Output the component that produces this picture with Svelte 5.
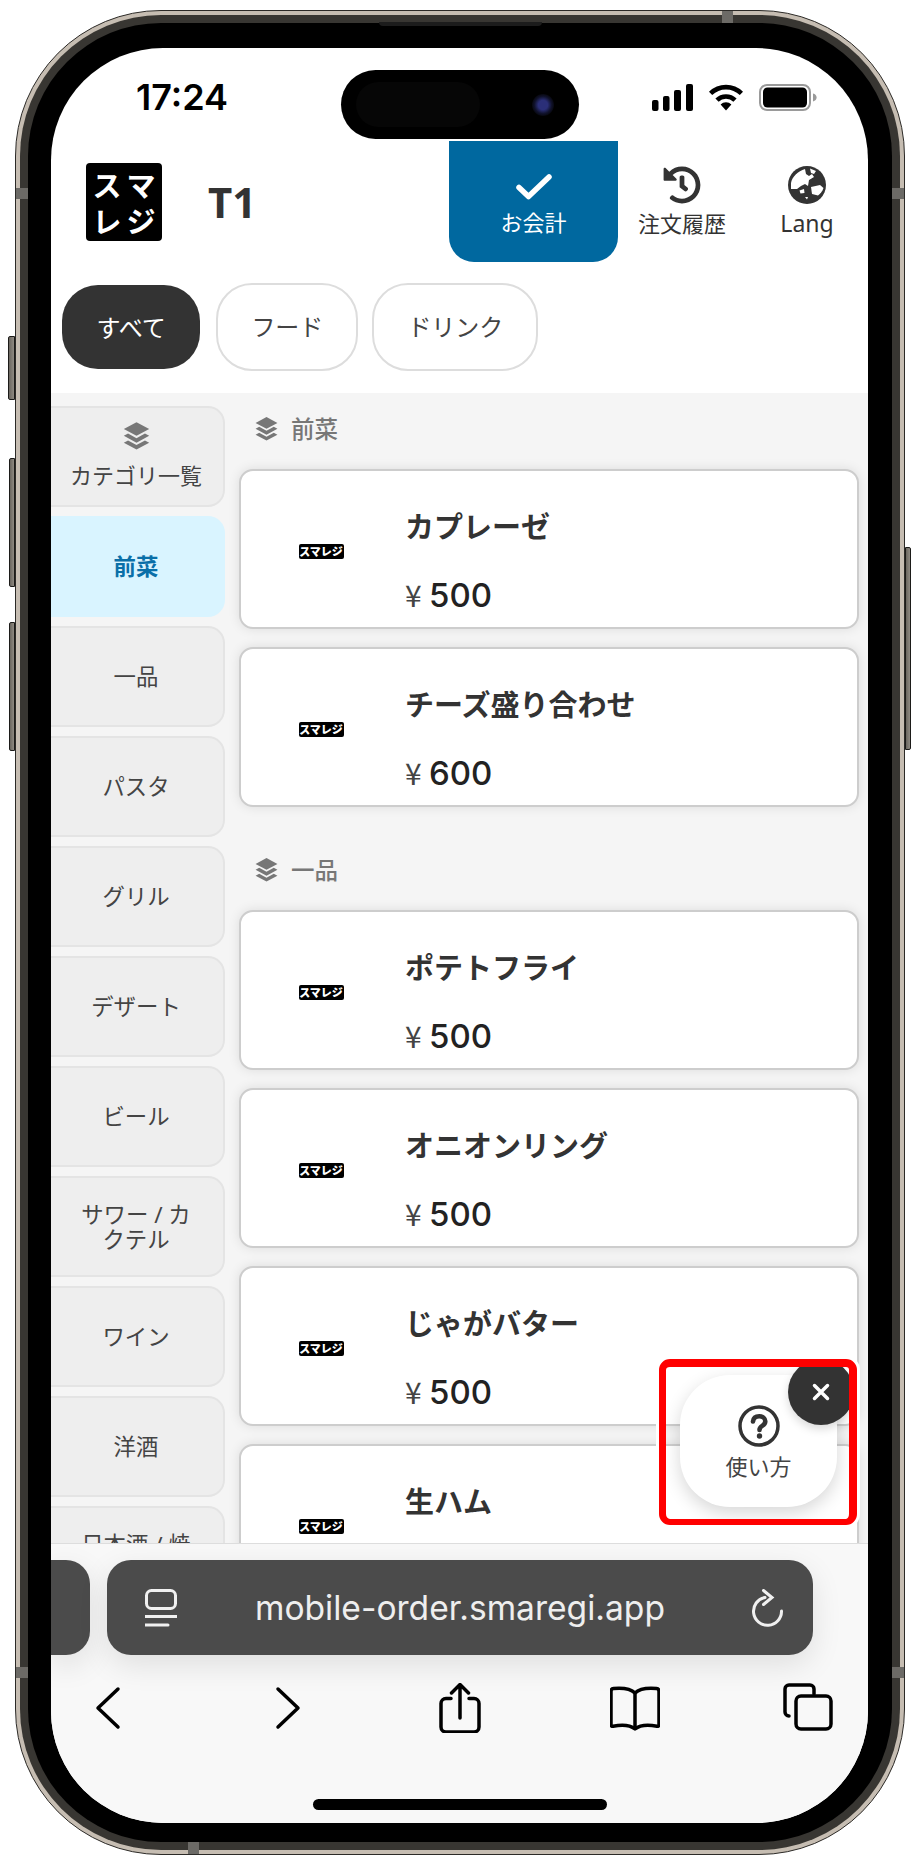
<script>
  const tabs = ["すべて", "フード", "ドリンク"];

  const categories = [
    { name: "前菜", active: true },
    { name: "一品" },
    { name: "パスタ" },
    { name: "グリル" },
    { name: "デザート" },
    { name: "ビール" },
    { name: "サワー / カクテル" },
    { name: "ワイン" },
    { name: "洋酒" },
    { name: "日本酒 / 焼酎" },
  ];

  const sections = [
    {
      title: "前菜",
      items: [
        { name: "カプレーゼ", price: 500 },
        { name: "チーズ盛り合わせ", price: 600 },
      ],
    },
    {
      title: "一品",
      items: [
        { name: "ポテトフライ", price: 500 },
        { name: "オニオンリング", price: 500 },
        { name: "じゃがバター", price: 500 },
        { name: "生ハム", price: 500 },
      ],
    },
  ];
</script>

{#snippet layers(cls)}
  <svg class={cls} viewBox="0 0 24 24" aria-hidden="true">
    <path d="M12 1 22.5 6.6 12 12.2 1.5 6.6Z" />
    <path d="M5 10.4 12 14.2 19 10.4 22.5 12.3 12 18 1.5 12.3Z" />
    <path d="M5 16.1 12 19.9 19 16.1 22.5 18 12 23.6 1.5 18Z" />
  </svg>
{/snippet}

<div class="phone">
  <span class="btn silence"></span>
  <span class="btn vol-up"></span>
  <span class="btn vol-down"></span>
  <span class="btn power"></span>
  <span class="speaker"></span>
  <span class="seam seam-top"></span>
  <span class="seam seam-left"></span>
  <span class="seam seam-right"></span>
  <span class="seam seam-left-low"></span>
  <span class="seam seam-right-low"></span>
  <span class="seam seam-bottom"></span>

  <div class="band">
    <div class="bezel">
      <div class="screen">
        <div class="island">
          <span class="sensor"></span>
          <span class="camera"></span>
        </div>

        <div class="status">
          <span class="time">17:24</span>
          <div class="status-icons">
            <svg class="signal" viewBox="0 0 41 27" aria-hidden="true">
              <rect x="0" y="16" width="6.5" height="11" rx="2" />
              <rect x="11" y="12" width="6.5" height="15" rx="2" />
              <rect x="22" y="6" width="7" height="21" rx="2" />
              <rect x="34" y="0" width="7" height="27" rx="2" />
            </svg>
            <svg class="wifi" viewBox="0 0 36 27" aria-hidden="true">
              <path class="arc" d="M2.6 9.4A22 22 0 0 1 33.4 9.4" />
              <path class="arc" d="M9 16.2A12.8 12.8 0 0 1 27 16.2" />
              <path d="M12.6 20.6A7.6 7.6 0 0 1 23.4 20.6L18 26.4Z" />
            </svg>
            <svg class="battery" viewBox="0 0 58 27" aria-hidden="true">
              <rect class="shell" x="1" y="1" width="50" height="25" rx="7" />
              <rect x="4" y="3.5" width="44" height="20" rx="4.5" />
              <path class="nub" d="M54 9.5c2.4.6 3.6 2.2 3.6 4s-1.2 3.4-3.6 4Z" />
            </svg>
          </div>
        </div>

        <header class="header">
          <div class="logo">
            <span>ス</span><span>マ</span><span>レ</span><span>ジ</span>
          </div>
          <span class="table">T1</span>
          <div class="actions">
            <button class="checkout">
              <svg class="check" viewBox="0 0 36 26" aria-hidden="true">
                <path d="M3 13.5 12.5 22.5 33 3" />
              </svg>
              <span>お会計</span>
            </button>
            <button class="action history">
              <svg viewBox="0 0 512 512" aria-hidden="true">
                <path d="M504 255.531c.253 136.64-111.18 248.372-247.82 248.468-59.015.042-113.223-20.53-155.822-54.911-11.077-8.94-11.905-25.541-1.839-35.607l11.267-11.267c8.609-8.609 22.353-9.551 31.891-1.984C173.062 425.135 212.781 440 256 440c101.705 0 184-82.311 184-184 0-101.705-82.311-184-184-184-48.814 0-93.149 18.969-126.068 49.932l50.754 50.754c10.08 10.08 2.941 27.314-11.313 27.314H24c-8.837 0-16-7.163-16-16V38.627c0-14.254 17.234-21.393 27.314-11.314l49.372 49.372C129.209 34.136 189.552 8 256 8c136.81 0 247.747 110.78 248 247.531zm-180.912 78.784l9.823-12.63c8.138-10.463 6.253-25.542-4.21-33.679L288 256.349V152c0-13.255-10.745-24-24-24h-16c-13.255 0-24 10.745-24 24v135.651l65.409 50.874c10.463 8.137 25.541 6.253 33.679-4.21z" />
              </svg>
              <span>注文履歴</span>
            </button>
            <button class="action lang">
              <svg viewBox="0 0 38 38" aria-hidden="true">
                <circle cx="19" cy="19" r="19" />
                <path class="land" d="M3 17C4 11 10 5 17 3l1 5 3 2 3-2 2 3-5 3-1 6-3-2-4 2-4 3-6 0Z" />
                <path class="land" d="M22 2.5 28 5l-2 3-3-1Z" />
                <path class="land" d="M23 21 32 19l3.500 3c-1 3-3 6-5.500 7.500l-6-1.500Z" />
                <path class="land" d="M11.5 24.500 16 23l.5 4-4 .5Z" />
                <path class="land" d="M17 31h3l-1 2.500Z" />
              </svg>
              <span>Lang</span>
            </button>
          </div>
        </header>

        <nav class="tabs">
          {#each tabs as tab, i}
            <button class="tab" class:selected={i === 0}>{tab}</button>
          {/each}
        </nav>

        <main class="main">
          <aside class="sidebar">
            <button class="cat first">
              {@render layers("cat-icon")}
              <span>カテゴリ一覧</span>
            </button>
            {#each categories as cat}
              <button class="cat" class:active={cat.active}>{cat.name}</button>
            {/each}
          </aside>

          <div class="content">
            {#each sections as section}
              <section class="section">
                <h2 class="section-title">
                  {@render layers("title-icon")}
                  <span>{section.title}</span>
                </h2>
                <div class="cards">
                  {#each section.items as item}
                    <article class="card">
                      <div class="thumb">
                        <span class="mini-logo">スマレジ</span>
                      </div>
                      <div class="info">
                        <div class="name">{item.name}</div>
                        <div class="price"><span class="yen">¥</span>{item.price}</div>
                      </div>
                    </article>
                  {/each}
                </div>
              </section>
            {/each}
          </div>

          <div class="callout">
            <button class="help">
              <svg viewBox="0 0 42 42" aria-hidden="true">
                <circle cx="21" cy="21" r="19" />
                <path class="mark" d="M15 16.5c.4-3.300 2.900-5.200 6.200-5.200 3.500 0 6.100 2.100 6.100 5 0 2.400-1.300 3.500-3.100 4.600-1.800 1.100-2.700 2-2.700 4.100" />
                <circle class="dot" cx="21.5" cy="31" r="2.7" />
              </svg>
              <span>使い方</span>
            </button>
            <button class="close" aria-label="close">
              <svg viewBox="0 0 18 18" aria-hidden="true">
                <path d="M2.5 2.5 15.5 15.5M15.5 2.5 2.5 15.5" />
              </svg>
            </button>
          </div>
        </main>

        <footer class="toolbar">
          <div class="pills">
            <div class="pill prev"></div>
            <div class="pill address">
              <svg class="aa" viewBox="0 0 32 38" aria-hidden="true">
                <rect x="1.5" y="1.5" width="29" height="18" rx="5" />
                <path d="M0 27.5H32M0 36H23" />
              </svg>
              <span class="url">mobile-order.smaregi.app</span>
              <svg class="reload" viewBox="0 0 32 38" aria-hidden="true">
                <path d="M14 8.5A14 14 0 1 0 30.5 22" />
                <path d="M12.5 1.5 21 8.5 12.5 15.5" />
              </svg>
            </div>
          </div>

          <div class="nav-icons">
            <svg viewBox="0 0 50 50" aria-hidden="true">
              <path d="M35 6 15 25 35 44" />
            </svg>
            <svg class="forward" viewBox="0 0 50 50" aria-hidden="true">
              <path d="M15 6 35 25 15 44" />
            </svg>
            <svg class="share" viewBox="0 0 50 50" aria-hidden="true">
              <path d="M16 15.5H11a5 5 0 0 0-5 5V44a5 5 0 0 0 5 5h28a5 5 0 0 0 5-5V20.500a5 5 0 0 0-5-5H34" />
              <path d="M25 35V2M16.500 10 25 1.500 33.500 10" />
            </svg>
            <svg class="book" viewBox="0 0 50 50" aria-hidden="true">
              <path d="M25 10C21 6 15 4.500 3.500 5.500c-2 .2-2.500 1-2.500 3V42c0 1 .8 1.500 2 1.300C12 41.500 20 42 25 46c5-4 13-4.500 22-2.700 1.200.2 2-.3 2-1.300V8.500c0-2-.5-2.800-2.500-3C35 4.500 29 6 25 10Z" />
              <path d="M25 10V45" />
            </svg>
            <svg viewBox="0 0 50 50" aria-hidden="true">
              <path d="M6 33a4 4 0 0 1-4-4V6a4 4 0 0 1 4-4H27a4 4 0 0 1 4 4v5" />
              <rect x="13" y="13" width="35" height="33" rx="5" />
            </svg>
          </div>

          <div class="home"></div>
        </footer>
      </div>
    </div>
  </div>
</div>

<style>
  :global(body) {
    margin: 0;
    background: #fff;
    font-family: "Noto Sans", "Noto Sans CJK JP", sans-serif;
  }

  button {
    font: inherit;
    border: none;
    background: none;
    padding: 0;
  }

  .phone {
    position: relative;
    box-sizing: border-box;
    width: 890px;
    height: 1845px;
    margin: 10px 0 0 15px;
    padding: 4px;
    border: 1px solid #2c2a27;
    border-radius: 146px;
    background: #c6bdb2;
  }

  .band {
    padding: 8px;
    border-radius: 141px;
    background: #383632;
  }

  .bezel {
    padding: 25px 24px 19px 23px;
    border-radius: 133px;
    background: #000;
  }

  .screen {
    position: relative;
    display: flex;
    flex-direction: column;
    width: 817px;
    height: 1775px;
    overflow: hidden;
    border-radius: 112px;
    background: #fff;
  }

  /* hardware bits hanging off the frame */
  .btn {
    position: absolute;
    width: 5px;
    border: 1px solid #1c1b19;
    border-radius: 2px 0 0 2px;
    background: linear-gradient(90deg, #6a665f, #8f8a82);
  }

  .silence {
    left: -8px;
    top: 325px;
    height: 62px;
  }

  .vol-up {
    left: -7px;
    top: 447px;
    width: 4px;
    height: 127px;
  }

  .vol-down {
    left: -7px;
    top: 611px;
    width: 4px;
    height: 127px;
  }

  .power {
    right: -7px;
    top: 536px;
    width: 4px;
    height: 201px;
    border-radius: 0 2px 2px 0;
  }

  .speaker {
    position: absolute;
    left: 363px;
    top: 11px;
    width: 163px;
    height: 4px;
    border-radius: 0 0 4px 4px;
    background: #1c1c1c;
  }

  .seam {
    position: absolute;
    background: #6c6a66;
  }

  .seam-top {
    left: 706px;
    top: 0;
    width: 11px;
    height: 12px;
  }

  .seam-left {
    left: 0;
    top: 177px;
    width: 12px;
    height: 11px;
  }

  .seam-right {
    right: 0;
    top: 177px;
    width: 12px;
    height: 11px;
  }

  .seam-left-low {
    left: 0;
    top: 1656px;
    width: 12px;
    height: 11px;
  }

  .seam-right-low {
    right: 0;
    top: 1656px;
    width: 12px;
    height: 11px;
  }

  .seam-bottom {
    left: 172px;
    bottom: 0;
    width: 11px;
    height: 12px;
  }

  .island {
    position: absolute;
    left: 290px;
    top: 22px;
    z-index: 3;
    width: 238px;
    height: 69px;
    border-radius: 35px;
    background: #000;
  }

  .sensor {
    position: absolute;
    left: 15px;
    top: 12px;
    width: 124px;
    height: 45px;
    border-radius: 23px;
    background: #060606;
  }

  .camera {
    position: absolute;
    left: 191px;
    top: 24px;
    width: 22px;
    height: 22px;
    border-radius: 50%;
    background: radial-gradient(circle, #2b2f78 0 30%, #10122c 55%, #050508 75%);
  }

  .status {
    display: flex;
    align-items: center;
    justify-content: space-between;
    flex: none;
    height: 93px;
    padding: 5px 51px 0 85px;
    box-sizing: border-box;
  }

  .time {
    font-family: Inter, sans-serif;
    font-size: 36px;
    font-weight: 600;
    color: #000;
  }

  .status-icons {
    display: flex;
    align-items: center;
    gap: 15px;
  }

  .signal {
    width: 41px;
    height: 27px;
  }

  .wifi {
    width: 36px;
    height: 27px;
  }

  .wifi .arc {
    fill: none;
    stroke: #000;
    stroke-width: 4.6;
  }

  .battery {
    width: 58px;
    height: 27px;
  }

  .battery .shell {
    fill: none;
    stroke: #9a9a9a;
    stroke-width: 2;
  }

  .battery .nub {
    fill: #9a9a9a;
  }

  .header {
    display: flex;
    align-items: center;
    flex: none;
    height: 121px;
    padding-left: 35px;
  }

  .logo {
    display: grid;
    grid-template-columns: 1fr 1fr;
    place-items: center;
    box-sizing: border-box;
    width: 76px;
    height: 78px;
    padding: 3px 4px;
    border-radius: 4px;
    background: #000;
    color: #fff;
    font-family: "Noto Sans CJK JP", sans-serif;
    font-size: 29px;
    font-weight: 700;
    line-height: 36px;
  }

  .table {
    margin-left: 46px;
    font-size: 42px;
    font-weight: 700;
    line-height: 1;
    color: #333;
  }

  .actions {
    display: flex;
    align-self: stretch;
    margin-left: auto;
  }

  .checkout,
  .action {
    display: flex;
    flex-direction: column;
    align-items: center;
    justify-content: center;
    font-size: 22px;
    line-height: 30px;
    color: #333;
  }

  .checkout {
    width: 169px;
    gap: 7px;
    padding-top: 8px;
    border-radius: 0 0 25px 25px;
    background: #00689f;
    color: #fff;
  }

  .check {
    width: 36px;
    height: 26px;
    fill: none;
    stroke: #fff;
    stroke-width: 5.5;
    stroke-linecap: round;
    stroke-linejoin: round;
  }

  .action {
    gap: 4px;
  }

  .action svg {
    width: 38px;
    height: 38px;
    fill: #333;
  }

  .action .land {
    fill: #fff;
  }

  .history {
    width: 128px;
  }

  .lang {
    width: 122px;
    font-size: 23px;
  }

  .tabs {
    display: flex;
    align-items: flex-start;
    flex: none;
    gap: 14px;
    box-sizing: border-box;
    height: 131px;
    padding: 21px 0 0 9px;
  }

  .tab {
    box-sizing: border-box;
    height: 88px;
    padding: 0 33px 4px;
    border: 2px solid #ddd;
    border-radius: 36px;
    font-size: 24px;
    color: #444;
  }

  .tab.selected {
    height: 84px;
    margin: 2px 2px 0 2px;
    padding: 0 34.5px 2px;
    border: none;
    background: #333;
    color: #fff;
  }

  .main {
    position: relative;
    display: flex;
    flex: 1;
    min-height: 0;
    overflow: hidden;
    background: #f5f5f5;
  }

  .sidebar {
    display: flex;
    flex: none;
    flex-direction: column;
    gap: 9px;
    box-sizing: border-box;
    width: 174px;
    padding-top: 13px;
  }

  .cat {
    display: flex;
    flex: none;
    flex-direction: column;
    align-items: center;
    justify-content: center;
    box-sizing: border-box;
    height: 101px;
    padding: 0 22px 0 20px;
    border: 2px solid #e4e4e4;
    border-left: none;
    border-radius: 0 17px 17px 0;
    background: #eee;
    font-size: 22.4px;
    line-height: 25px;
    color: #444;
    text-align: center;
  }

  .cat.first {
    gap: 13px;
    padding: 0 2px 5px 0;
    font-size: 22px;
    white-space: nowrap;
  }

  .cat.active {
    border-color: #d9f4ff;
    background: #d9f4ff;
    font-weight: 700;
    color: #0a6fa8;
  }

  .cat-icon {
    width: 29px;
    height: 29px;
    fill: #777;
  }

  .content {
    flex: 1;
    min-width: 0;
    padding: 0 9px 0 14px;
  }

  .section {
    margin-bottom: 27px;
  }

  .section-title {
    display: flex;
    align-items: center;
    gap: 12px;
    box-sizing: border-box;
    height: 76px;
    margin: 0;
    padding: 0 0 6px 15px;
    font-size: 23.5px;
    font-weight: 500;
    color: #777;
  }

  .title-icon {
    width: 25px;
    height: 25px;
    fill: #777;
  }

  .cards {
    display: flex;
    flex-direction: column;
    gap: 18px;
  }

  .card {
    display: flex;
    box-sizing: border-box;
    height: 160px;
    border: 2px solid #cdcdcd;
    border-radius: 14px;
    background: #fff;
    box-shadow: 0 0 12px rgba(0, 0, 0, 0.1);
  }

  .thumb {
    display: flex;
    flex: none;
    align-items: center;
    justify-content: center;
    width: 160px;
    padding-top: 4px;
    box-sizing: border-box;
  }

  .mini-logo {
    width: 45px;
    height: 15px;
    border-radius: 2px;
    background: #000;
    color: #fff;
    font-family: "Noto Sans CJK JP", sans-serif;
    font-size: 11px;
    font-weight: 900;
    line-height: 15px;
    text-align: center;
    white-space: nowrap;
  }

  .info {
    padding: 38px 0 0 4px;
  }

  .name {
    font-size: 29px;
    font-weight: 700;
    line-height: 36px;
    color: #333;
  }

  .price {
    margin-top: 29px;
    font-family: Inter, sans-serif;
    font-size: 33px;
    font-weight: 500;
    line-height: 40px;
    color: #222;
  }

  .yen {
    display: inline-block;
    width: 24px;
    font-family: "Noto Sans CJK JP", sans-serif;
    font-size: 30px;
    font-weight: 400;
    color: #444;
  }

  /* red annotation box with the floating help button inside */
  .callout {
    position: absolute;
    left: 608px;
    top: 966px;
    box-sizing: border-box;
    width: 198px;
    height: 166px;
    overflow: hidden;
    border-style: solid;
    border-color: #f00;
    border-width: 8px 8px 6px 7px;
    border-radius: 11px;
    box-shadow: 0 0 0 3px #fff;
  }

  .help {
    position: absolute;
    left: 14px;
    top: 8px;
    display: flex;
    flex-direction: column;
    align-items: center;
    justify-content: center;
    gap: 4px;
    width: 157px;
    height: 132px;
    padding-top: 4px;
    border-radius: 50px;
    background: #fff;
    box-shadow: 0 6px 18px rgba(0, 0, 0, 0.16);
    font-size: 22px;
    line-height: 30px;
    color: #444;
  }

  .help svg {
    width: 42px;
    height: 42px;
    fill: none;
    stroke: #333;
    stroke-width: 3.5;
    stroke-linecap: round;
  }

  .help .mark {
    stroke-width: 4.6;
  }

  .help .dot {
    fill: #333;
    stroke: none;
  }

  .close {
    position: absolute;
    left: 122px;
    top: -8px;
    display: flex;
    align-items: center;
    justify-content: center;
    width: 66px;
    height: 66px;
    border-radius: 50%;
    background: #333;
    box-shadow: 0 4px 10px rgba(0, 0, 0, 0.15);
  }

  .close svg {
    width: 18px;
    height: 18px;
    fill: none;
    stroke: #fff;
    stroke-width: 3.5;
    stroke-linecap: round;
  }

  .toolbar {
    display: flex;
    flex: none;
    flex-direction: column;
    box-sizing: border-box;
    height: 280px;
    padding-top: 16px;
    border-top: 1px solid #ddd;
    background: #f8f8f8;
  }

  .pills {
    display: flex;
    gap: 17px;
    height: 95px;
  }

  .pill {
    background: #4b4b4b;
    box-shadow: 0 10px 30px rgba(0, 0, 0, 0.1);
  }

  .prev {
    width: 39px;
    border-radius: 0 24px 24px 0;
  }

  .address {
    display: flex;
    align-items: center;
    box-sizing: border-box;
    width: 706px;
    padding: 0 30px 0 38px;
    border-radius: 24px;
  }

  .url {
    flex: 1;
    padding-right: 8px;
    font-family: Inter, sans-serif;
    font-size: 33.6px;
    text-align: center;
    color: #eee;
  }

  .aa,
  .reload {
    flex: none;
    width: 32px;
    height: 38px;
    fill: none;
    stroke: #f0f0f0;
    stroke-width: 3;
    stroke-linecap: round;
  }

  .nav-icons {
    display: flex;
    justify-content: space-between;
    padding: 28px 35px 0 32px;
  }

  .nav-icons svg {
    width: 50px;
    height: 50px;
    fill: none;
    stroke: #000;
    stroke-width: 3.5;
    stroke-linecap: round;
    stroke-linejoin: round;
  }

  .forward {
    transform: translateX(5px);
  }

  .share,
  .book {
    transform: translateX(2px);
  }

  .home {
    width: 294px;
    height: 11px;
    margin: auto auto 13px;
    border-radius: 6px;
    background: #000;
  }
</style>
